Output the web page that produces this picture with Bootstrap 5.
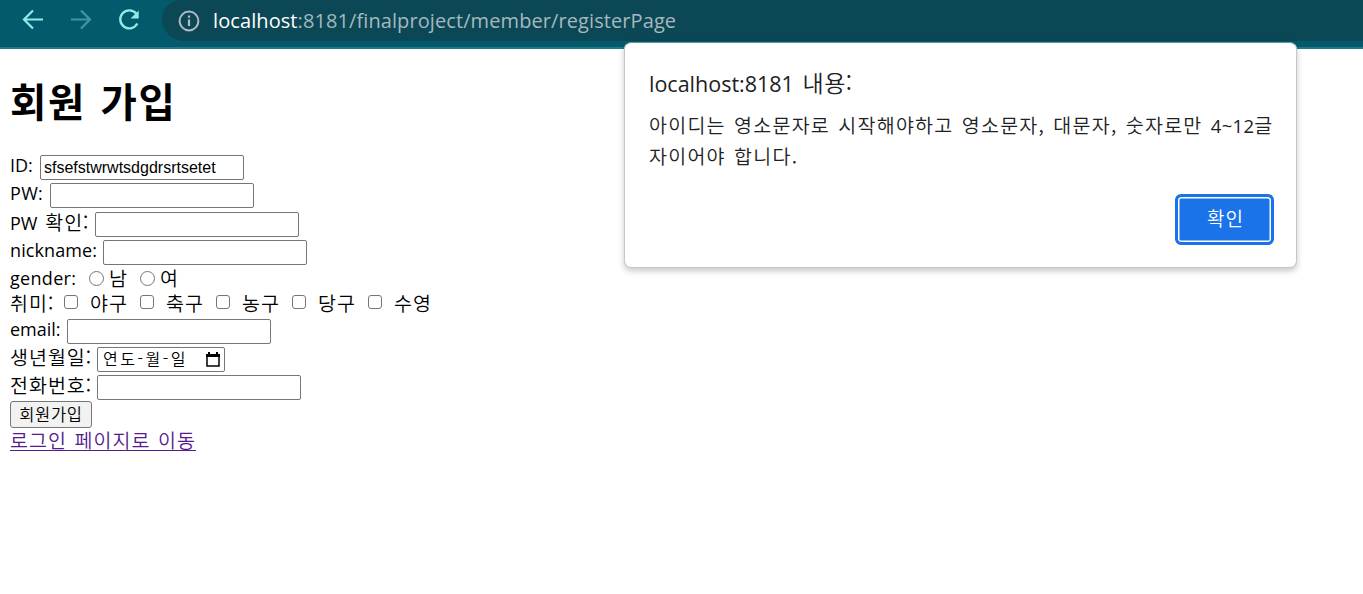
<!DOCTYPE html>
<html lang="ko">

<head>
    <meta charset="UTF-8">
    <meta name="viewport" content="width=device-width, initial-scale=1.0">
    <title>회원 가입</title>
    <link href="https://cdn.jsdelivr.net/npm/bootstrap@5.3.0/dist/css/bootstrap.min.css" rel="stylesheet">
    <style>
        body {
            font-family: "Open Sans", "Noto Sans CJK KR", sans-serif;
            font-size: 18px;
            line-height: 24px;
            color: #000;
            height: 594px;
            overflow: hidden;
        }

        .ko {
            font-family: "Noto Sans CJK KR", sans-serif;
            font-size: 19.5px;
            font-weight: 350;
            letter-spacing: 1px;
            word-spacing: 1.3px;
        }

        .latin {
            font-family: "Open Sans", sans-serif;
            font-size: 18px;
            font-weight: 400;
            letter-spacing: 0;
        }

        /* browser bar */
        .browser-bar {
            height: 49px;
            background: #035a6c;
            border-bottom: 2px solid #22788a;
            padding-left: 21px;
        }

        .browser-bar .nav-icon {
            width: 24px;
            height: 24px;
            margin: 8px 24px 0 0;
        }

        .address {
            height: 41px;
            margin-left: -3px;
            padding-left: 16px;
            background: #0c4755;
            border-radius: 20px 0 0 24px;
            color: #a3b9bf;
            font-size: 20px;
            line-height: 41px;
            letter-spacing: .09px;
        }

        .address .host {
            color: #fff;
        }

        .url-text {
            margin-left: 13px;
        }

        /* register form */
        .register {
            padding: 27px 10px 0;
        }

        .register h1 {
            font: 700 39.5px/48px "Noto Sans CJK KR", sans-serif;
            letter-spacing: 1.6px;
            word-spacing: 2px;
            margin-bottom: 30px;
        }

        .line {
            height: 28.4px;
        }

        .line-short {
            height: 26px;
        }

        .line-gender {
            height: 25px;
            margin-top: -1px;
            margin-bottom: 0;
        }

        .line label,
        .line-short label {
            line-height: 23px;
        }

        .line label.ko,
        .line-short .ko,
        .line-short.ko label,
        .hobby {
            line-height: 21px;
        }

        .field {
            width: 204px;
            height: 25px;
            margin-top: 1px;
            border: 1px solid #767676;
            border-radius: 2px;
            padding: 0 3px;
            font: 16px/22px "Liberation Sans", sans-serif;
            color: #000;
            background: #fff;
        }

        .w-id { width: 30px; }
        .w-pw { width: 40px; letter-spacing: .3px; }
        .w-check { width: 85px; white-space: nowrap; }
        .w-nick { width: 93px; letter-spacing: .1px; }
        .w-gender { width: 79px; letter-spacing: .3px; }
        .w-hobby { width: 54px; }
        .w-email { width: 57px; }
        .w-long { width: 87px; white-space: nowrap; }

        .radio-dot,
        .check-box {
            width: 15px;
            height: 15px;
            border: 1px solid #767676;
            border-radius: 50%;
        }

        .radio-dot {
            margin-right: 5px;
        }

        .check-box {
            width: 14px;
            height: 14px;
            margin-top: 3px;
            border-radius: 3px;
        }

        .hobby {
            width: 76px;
            gap: 12px;
            white-space: nowrap;
        }

        .date {
            width: 128px;
            padding: 0 4px 0 5px;
            font: 350 16px/22px "Noto Sans CJK KR", sans-serif;
            letter-spacing: 2.5px;
        }

        .date span {
            margin-top: -3px;
        }

        .submit {
            width: 82px;
            height: 27px;
            margin-top: -2px;
            border: 1px solid #767676;
            border-radius: 3px;
            background: #f2f2f2;
            color: #000;
            font: 350 16.5px/22px "Noto Sans CJK KR", sans-serif;
            letter-spacing: .7px;
        }

        .login-link {
            color: #551a8b;
            text-decoration-thickness: 1px;
            text-underline-offset: 2px;
        }

        /* alert over the page */
        .alert-window {
            position: absolute;
            left: 624px;
            top: 42px;
            width: 673px;
            height: 226px;
            padding: 25px 22px 22px 24px;
            background: #fff;
            border: 1px solid #c4c7c8;
            border-top-color: #5c97a4;
            border-radius: 7px;
            box-shadow: 0 3px 6px rgba(0, 0, 0, .22);
            color: #202124;
        }

        .alert-title {
            font-size: 21.5px;
            line-height: 28px;
        }

        .alert-title .ko {
            font-size: 23px;
            letter-spacing: .5px;
            margin-left: 3px;
        }

        .alert-text {
            line-height: 30px;
            margin-top: 12px;
            letter-spacing: 1.25px;
            word-spacing: 1.6px;
            white-space: nowrap;
        }

        .alert-text .latin {
            font-size: 18.5px;
            letter-spacing: .3px;
        }

        .ok-btn {
            width: 99px;
            height: 51px;
            padding: 0 0 4px 2px;
            border: 3px solid #1a73e8;
            border-radius: 6px;
            background: #1a73e8;
            box-shadow: inset 0 0 0 1.5px #fff;
            color: #fff;
            font-size: 19px;
            line-height: 40px;
        }
    </style>
</head>

<body>
    <nav class="browser-bar d-flex">
        <svg class="nav-icon" viewBox="0 0 24 24" fill="none" stroke="#91eae7" stroke-width="2.2">
            <path d="M22 11.5H3M12 2.5L3 11.5L12 20.500" />
        </svg>
        <svg class="nav-icon" viewBox="0 0 24 24" fill="none" stroke="#4095a0" stroke-width="2.2">
            <path d="M2 11.500H21M12 2.500L21 11.500L12 20.500" />
        </svg>
        <svg class="nav-icon" viewBox="0 0 24 24" fill="none" stroke="#91eae7" stroke-width="2.4">
            <path d="M19.200 5.600A9 9 0 1 0 20.300 15.500" />
            <path d="M21.700 2.500V10.500H13.500Z" fill="#91eae7" stroke="none" />
        </svg>
        <div class="address flex-grow-1 d-flex align-items-center">
            <svg width="22" height="22" viewBox="0 0 22 22" fill="none" stroke="#b4bac3" stroke-width="2">
                <circle cx="11" cy="11" r="9.400" />
                <path d="M11 9.500V16M11 5.500V7.700" stroke-width="2.200" />
            </svg>
            <span class="url-text"><span class="host">localhost</span>:8181/finalproject/member/registerPage</span>
        </div>
    </nav>

    <main class="register">
        <h1>회원 가입</h1>
        <form>
            <div class="line d-flex"><label class="w-id">ID:</label><input class="field" value="sfsefstwrwtsdgdrsrtsetet"></div>
            <div class="line d-flex"><label class="w-pw">PW:</label><input class="field" type="password"></div>
            <div class="line d-flex"><label class="w-check ko"><span class="latin">PW</span> 확인:</label><input class="field" type="password"></div>
            <div class="line d-flex"><label class="w-nick">nickname:</label><input class="field"></div>
            <div class="line-short line-gender d-flex">
                <label class="w-gender">gender:</label>
                <span class="radio-dot mt-1"></span><span class="ko me-2">남</span>
                <span class="radio-dot mt-1 ms-1"></span><span class="ko">여</span>
            </div>
            <div class="line-short d-flex ko">
                <label class="w-hobby">취미:</label>
                <div class="hobby d-flex"><span class="check-box"></span>야구</div>
                <div class="hobby d-flex"><span class="check-box"></span>축구</div>
                <div class="hobby d-flex"><span class="check-box"></span>농구</div>
                <div class="hobby d-flex"><span class="check-box"></span>당구</div>
                <div class="hobby d-flex"><span class="check-box"></span>수영</div>
            </div>
            <div class="line d-flex"><label class="w-email">email:</label><input class="field"></div>
            <div class="line d-flex">
                <label class="w-long ko">생년월일:</label>
                <div class="field date d-flex justify-content-between align-items-center">
                    <span>연도-월-일</span>
                    <svg width="14" height="15" viewBox="0 0 14 15">
                        <path d="M1 3H13V14H1Z" fill="none" stroke="#000" stroke-width="1.500" />
                        <path d="M0 2H14V5H0ZM2 0H4V3H2ZM10 0H12V3H10Z" />
                    </svg>
                </div>
            </div>
            <div class="line d-flex"><label class="w-long ko">전화번호:</label><input class="field" type="tel"></div>
            <button type="button" class="submit d-block p-0">회원가입</button>
            <a class="login-link ko" href="#">로그인 페이지로 이동</a>
        </form>
    </main>

    <div class="alert-window d-flex flex-column" role="alertdialog">
        <div class="alert-title">localhost:8181 <span class="ko">내용:</span></div>
        <div class="alert-text ko">아이디는 영소문자로 시작해야하고 영소문자, 대문자, 숫자로만 <span class="latin">4~12</span>글<br>자이어야 합니다.</div>
        <button class="ok-btn ko ms-auto mt-auto" type="button">확인</button>
    </div>

    <script src="https://cdn.jsdelivr.net/npm/bootstrap@5.3.0/dist/js/bootstrap.bundle.min.js"></script>
</body>

</html>
